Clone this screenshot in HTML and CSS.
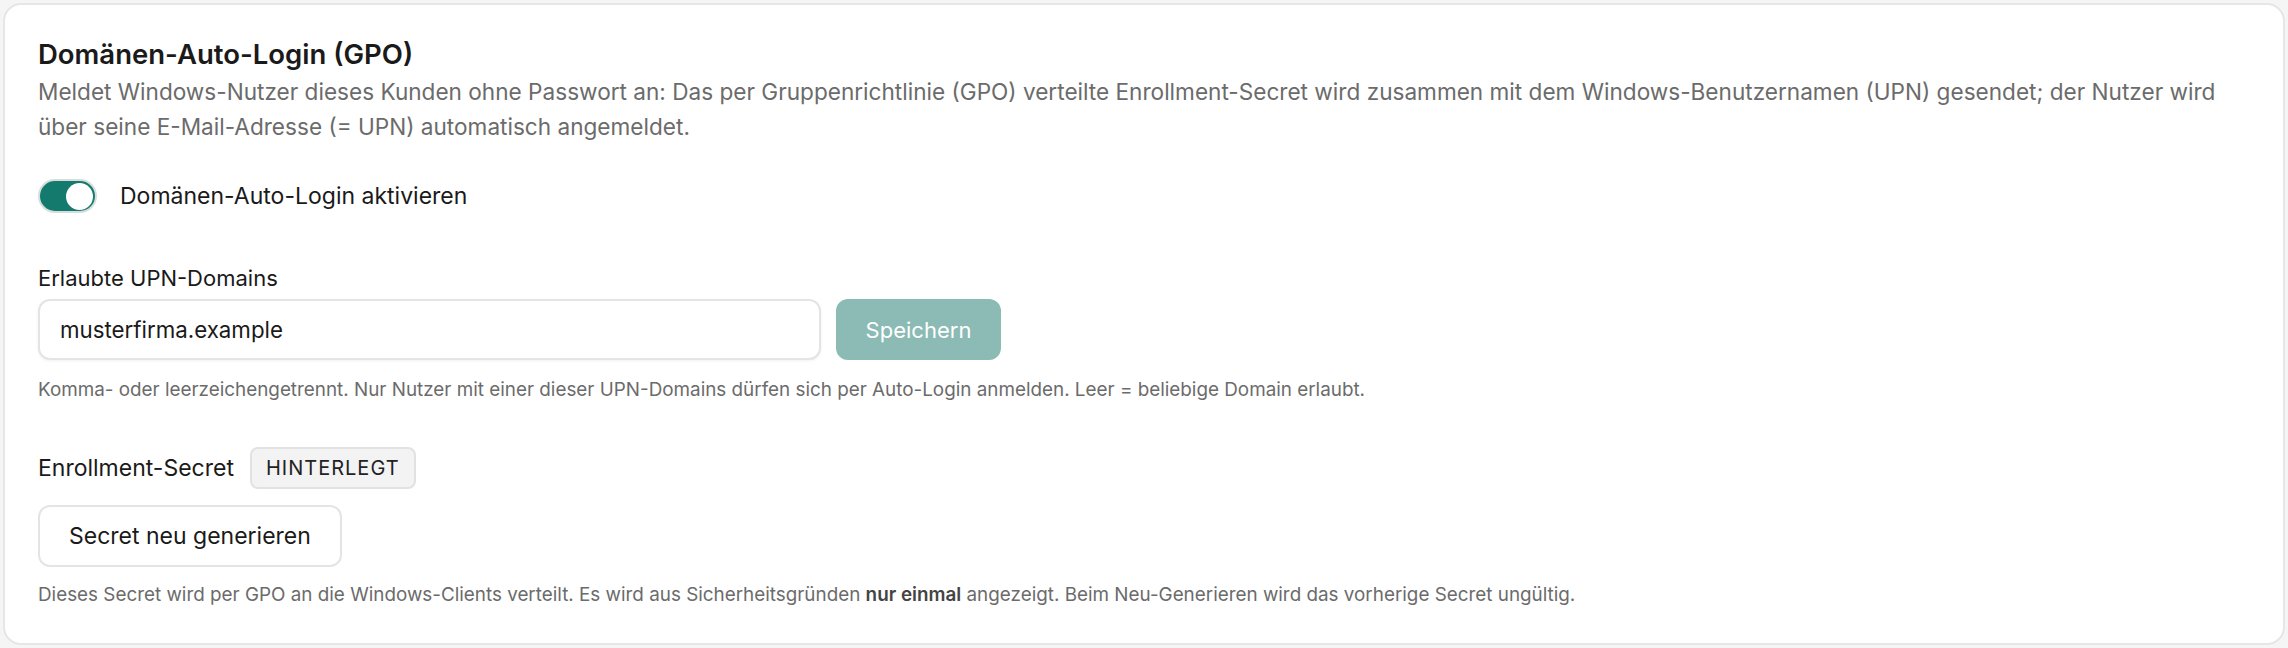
FILE: index.html
```html
<!DOCTYPE html>
<html lang="de">
<head>
  <meta charset="UTF-8" />
  <meta name="viewport" content="width=device-width, initial-scale=1" />
  <title>Domänen-Auto-Login</title>
  <link rel="stylesheet" href="styles.css">
</head>
<body>
  <section class="card">
    <h2 class="card-title">Domänen-Auto-Login (GPO)</h2>
    <p class="card-desc">Meldet Windows-Nutzer dieses Kunden ohne Passwort an: Das per Gruppenrichtlinie (GPO) verteilte Enrollment-Secret wird zusammen mit dem Windows-Benutzernamen (UPN) gesendet; der Nutzer wird über seine E-Mail-Adresse (= UPN) automatisch angemeldet.</p>

    <label class="switch-row">
      <span class="switch on"><span class="knob"></span></span>
      <span>Domänen-Auto-Login aktivieren</span>
    </label>

    <div class="field domains">
      <label class="field-label" for="upn-domains">Erlaubte UPN-Domains</label>
      <div class="field-row">
        <input class="text-input" id="upn-domains" type="text" value="musterfirma.example" />
        <button class="btn btn-primary" disabled>Speichern</button>
      </div>
      <p class="hint">Komma- oder leerzeichengetrennt. Nur Nutzer mit einer dieser UPN-Domains dürfen sich per Auto-Login anmelden. Leer = beliebige Domain erlaubt.</p>
    </div>

    <div class="field secret">
      <div class="secret-head">
        <span class="field-label">Enrollment-Secret</span>
        <span class="badge">HINTERLEGT</span>
      </div>
      <button class="btn btn-outline">Secret neu generieren</button>
      <p class="hint">Dieses Secret wird per GPO an die Windows-Clients verteilt. Es wird aus Sicherheitsgründen <strong>nur einmal</strong> angezeigt. Beim Neu-Generieren wird das vorherige Secret ungültig.</p>
    </div>
  </section>
</body>
</html>
```

FILE: styles.css
```css
body {
  margin: 3px;
  font-family: 'Inter', 'Noto Sans', sans-serif;
  background-color: #f5f5f5;
  color: #1a1a1a;
}
.card {
  box-sizing: border-box;
  min-height: calc(100vh - 6px);
  background: white;
  border: 2px solid #e6e6e6;
  border-radius: 18px;
  padding: 33px 30px 34px 33px;
}
.card-title {
  margin: 0;
  font-size: 27.5px;
  line-height: 32px;
  font-weight: 600;
}
.card-desc {
  margin: 4px 0 0;
  font-size: 22.6px;
  line-height: 35px;
  color: #6b6b6b;
}
.switch-row {
  display: flex;
  align-items: center;
  gap: 23px;
  margin-top: 35px;
  font-size: 23px;
  cursor: pointer;
}
.switch {
  box-sizing: border-box;
  display: flex;
  align-items: center;
  width: 59px;
  height: 34px;
  padding: 0 2px;
  border-radius: 17px;
  border: 2px solid #d6dedd;
  background-color: #e0e0e0;
}
.switch.on {
  background-color: #157a6e;
  justify-content: flex-end;
}
.knob {
  width: 27px;
  height: 27px;
  border-radius: 50%;
  background: white;
}
.field-label {
  display: block;
  font-size: 22px;
  line-height: 30px;
}
.domains {
  margin-top: 50px;
}
.field-row {
  display: flex;
  gap: 15px;
  margin-top: 6px;
}
.text-input {
  box-sizing: border-box;
  width: 783px;
  height: 61px;
  padding: 0 20px;
  font-family: inherit;
  font-size: 22.3px;
  color: #1a1a1a;
  border: 2px solid #e4e4e4;
  border-radius: 12px;
  box-shadow: 0 1px 3px rgba(0,0,0,0.06);
  outline: none;
}
.btn {
  box-sizing: border-box;
  height: 61px;
  font-family: inherit;
  font-size: 22px;
  border-radius: 12px;
  cursor: pointer;
}
.btn-primary {
  width: 165px;
  border: none;
  color: white;
  background-color: #8bbbb4;
}
.btn-primary:disabled {
  cursor: default;
}
.btn-outline {
  display: block;
  height: 62px;
  padding: 0 29px;
  margin-top: 16px;
  font-size: 23px;
  background: white;
  color: #1a1a1a;
  border: 2px solid #e4e4e4;
}
.hint {
  margin: 16px 0 0;
  font-size: 18.85px;
  line-height: 28px;
  color: #6b6b6b;
}
.hint strong {
  color: #444;
  font-weight: 600;
}
.secret {
  margin-top: 43px;
}
.secret-head {
  display: flex;
  align-items: center;
  gap: 16px;
}
.secret-head .field-label {
  font-size: 23px;
}
.badge {
  box-sizing: border-box;
  display: inline-flex;
  align-items: center;
  height: 42px;
  padding: 0 14px;
  font-size: 20px;
  letter-spacing: 0.05em;
  color: #222;
  background-color: #f3f3f3;
  border: 2px solid #e2e2e2;
  border-radius: 8px;
}
.secret .hint {
  margin-top: 14px;
}
```
